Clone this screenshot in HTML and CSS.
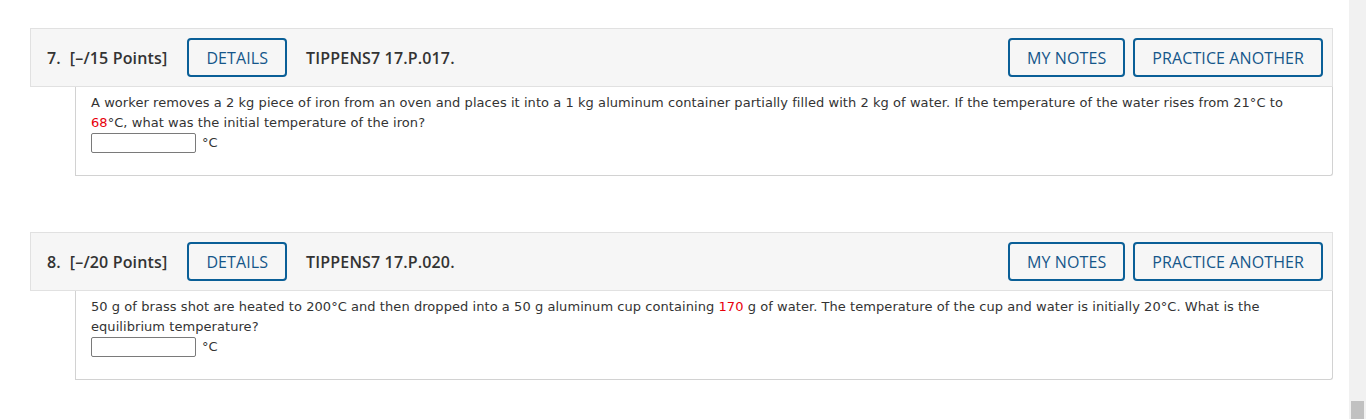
FILE: index.html
```html
<!DOCTYPE html>
<html lang="en">
<head>
<meta charset="utf-8">
<title>Questions</title>
<link rel="stylesheet" href="styles.css">
</head>
<body>
<div class="page">
  <div class="question">
    <div class="q-head">
      <span class="q-num">7.</span>
      <span class="q-points">[–/15 Points]</span>
      <button class="btn btn-details">DETAILS</button>
      <span class="q-ref">TIPPENS7 17.P.017.</span>
      <span class="spacer"></span>
      <button class="btn">MY NOTES</button>
      <button class="btn">PRACTICE ANOTHER</button>
    </div>
    <div class="q-body">
      <p class="q-text">A worker removes a 2 kg piece of iron from an oven and places it into a 1 kg aluminum container partially filled with 2 kg of water. If the temperature of the water rises from 21°C to <span class="red">68</span>°C, what was the initial temperature of the iron?</p>
      <div class="answer"><input class="ans-input" type="text"><span class="unit">°C</span></div>
    </div>
  </div>
  <div class="question">
    <div class="q-head">
      <span class="q-num">8.</span>
      <span class="q-points">[–/20 Points]</span>
      <button class="btn btn-details">DETAILS</button>
      <span class="q-ref">TIPPENS7 17.P.020.</span>
      <span class="spacer"></span>
      <button class="btn">MY NOTES</button>
      <button class="btn">PRACTICE ANOTHER</button>
    </div>
    <div class="q-body">
      <p class="q-text">50 g of brass shot are heated to 200°C and then dropped into a 50 g aluminum cup containing <span class="red">170</span> g of water. The temperature of the cup and water is initially 20°C. What is the equilibrium temperature?</p>
      <div class="answer"><input class="ans-input" type="text"><span class="unit">°C</span></div>
    </div>
  </div>
</div>
<div class="scrollbar"><div class="thumb"></div></div>
</body>
</html>
```
FILE: styles.css
```css
html, body {
  margin: 0;
  padding: 0;
  height: 100%;
  background: #fff;
  overflow: hidden;
}
body {
  display: flex;
}
.page {
  flex: 1;
  padding: 28px 16px 0 30px;
}
.question {
  margin-bottom: 56px;
}
.q-head {
  display: flex;
  align-items: center;
  height: 59px;
  box-sizing: border-box;
  padding: 0 9px 0 16px;
  background: #f6f6f6;
  border: 1px solid #e1e1e1;
  font-family: "Open Sans", sans-serif;
  font-size: 16px;
  letter-spacing: 0.15px;
  color: #333;
}
.q-num {
  font-weight: 600;
  margin-right: 9px;
}
.q-points {
  font-weight: 600;
}
.q-ref {
  font-weight: 600;
  margin-left: 19px;
}
.spacer {
  flex: 1;
}
.btn {
  font-family: "Open Sans", sans-serif;
  font-size: 16px;
  letter-spacing: 0.1px;
  color: #15568a;
  background: transparent;
  border: 2px solid #0a5f97;
  border-radius: 4px;
  height: 39px;
  box-sizing: border-box;
  padding: 0 17px;
  margin-left: 8px;
  cursor: pointer;
}
.btn-details {
  margin-left: 20px;
}
.q-body {
  margin-left: 45px;
  border: 1px solid #d2d2d2;
  border-top: none;
  border-bottom-right-radius: 3px;
  padding: 6px 15px 22px;
  font-family: "DejaVu Sans", Verdana, sans-serif;
  font-size: 13px;
  line-height: 20px;
  letter-spacing: 0.06px;
  color: #333;
}
.q-text {
  margin: 0;
}
.red {
  color: #e8000b;
}
.answer {
  display: flex;
  align-items: center;
  height: 20px;
}
.ans-input {
  width: 105px;
  height: 20px;
  box-sizing: border-box;
  border: 1px solid #7a7a7a;
  border-radius: 2px;
  margin: 0;
  padding: 0 3px;
  background: #fff;
}
.unit {
  margin-left: 6px;
}
.scrollbar {
  width: 17px;
  background: #f1f1f1;
  display: flex;
  flex-direction: column;
  justify-content: flex-end;
  align-items: center;
}
.thumb {
  width: 13px;
  height: 18px;
  background: #c1c1c1;
}
```
